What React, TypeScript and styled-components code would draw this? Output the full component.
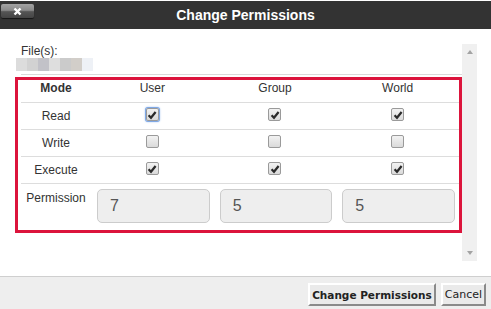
import styled, { createGlobalStyle } from 'styled-components';

const GlobalStyle = createGlobalStyle`
  html, body {
    margin: 0;
    padding: 0;
    background: #fff;
    overflow: hidden;
  }
  body {
    font-family: 'Liberation Sans', Arial, sans-serif;
  }
`;

type Perm = { label: string; user: boolean; group: boolean; world: boolean };

const perms: Perm[] = [
  { label: 'Read', user: true, group: true, world: true },
  { label: 'Write', user: false, group: false, world: false },
  { label: 'Execute', user: true, group: true, world: true },
];

const blurColors = ['#dcdcdc', '#d2d2d2', '#c2c2c8', '#dedede', '#cbcbcb', '#d2cec9', '#eef1f6'];

const Check = ({ checked, focused }: { checked: boolean; focused?: boolean }) => (
  <CheckBox $focused={focused}>
    {checked && (
      <svg width="10" height="10" viewBox="0 0 10 10">
        <path d="M1.6 5.2 L4 7.8 L8.6 2" fill="none" stroke="#2a2a2a" strokeWidth="2.2" />
      </svg>
    )}
  </CheckBox>
);

const App = () => {
  return (
    <Dialog>
      <GlobalStyle />
      <Header>
        <CloseButton>
          <svg width="9" height="9" viewBox="0 0 9 9">
            <path d="M1.5 1.5 L7.5 7.5 M7.5 1.5 L1.5 7.5" stroke="#fff" strokeWidth="2.4" />
          </svg>
        </CloseButton>
        <Title>Change Permissions</Title>
        <div />
      </Header>

      <Body>
        <ScrollArea>
          <Content>
            <FileLabel>File(s):</FileLabel>
            <BlurName>
              {blurColors.map((c, i) => (
                <BlurBlock key={i} $color={c} />
              ))}
            </BlurName>
            <Divider />
            <PermBox>
              <Row $height={21} $head>
                <ModeHead>Mode</ModeHead>
                <div>User</div>
                <div>Group</div>
                <div>World</div>
              </Row>
              {perms.map((p, i) => (
                <Row key={p.label} $height={26}>
                  <div>{p.label}</div>
                  <Check checked={p.user} focused={i === 0} />
                  <Check checked={p.group} />
                  <Check checked={p.world} />
                </Row>
              ))}
              <PermRow>
                <PermLabel>Permission</PermLabel>
                <InputCell>
                  <ValueInput readOnly value="7" />
                </InputCell>
                <InputCell>
                  <ValueInput readOnly value="5" />
                </InputCell>
                <InputCell>
                  <ValueInput readOnly value="5" />
                </InputCell>
              </PermRow>
            </PermBox>
          </Content>
          <ScrollBar>
            <ArrowUp />
            <ArrowDown />
          </ScrollBar>
        </ScrollArea>
      </Body>

      <Footer>
        <FooterButton $bold>Change Permissions</FooterButton>
        <FooterButton>Cancel</FooterButton>
      </Footer>
    </Dialog>
  );
};

export default App;

const Dialog = styled.div`
  width: 491px;
  height: 309px;
  padding-top: 1px;
  box-sizing: border-box;
  display: flex;
  flex-direction: column;
  background: #fff;
  color: #333;
`;

const Header = styled.div`
  height: 28px;
  background: #333;
  display: grid;
  grid-template-columns: 1fr auto 1fr;
  align-items: start;
`;

const CloseButton = styled.div`
  width: 33px;
  height: 14px;
  margin: 3px 0 0 1px;
  border-radius: 2px;
  background: linear-gradient(#a3a3a3 0%, #8a8a8a 45%, #555 55%, #444 100%);
  box-shadow: 0 1px 1px rgba(0, 0, 0, 0.6);
  display: flex;
  align-items: center;
  justify-content: center;
`;

const Title = styled.div`
  color: #fff;
  font-size: 14px;
  font-weight: bold;
  line-height: 28px;
`;

const Body = styled.div`
  flex: 1;
  padding: 15px 14px 0 15px;
`;

const ScrollArea = styled.div`
  height: 217px;
  display: flex;
`;

const Content = styled.div`
  flex: 1;
  display: flex;
  flex-direction: column;
`;

const FileLabel = styled.div`
  font-size: 12px;
  line-height: 14px;
  padding-left: 6px;
`;

const BlurName = styled.div`
  display: flex;
  margin: 0 0 0 1px;
  height: 13px;
`;

const BlurBlock = styled.div<{ $color: string }>`
  width: 11px;
  height: 13px;
  background: ${(p) => p.$color};
`;

const Divider = styled.div`
  height: 1px;
  background: #dadada;
  margin: 3px 0 0 6px;
`;

const PermBox = styled.div`
  margin-top: 2px;
  border: 3px solid #dc143c;
  padding: 0 0 0 3px;
  font-size: 12px;
`;

const Row = styled.div<{ $height: number; $head?: boolean }>`
  display: grid;
  grid-template-columns: 70px repeat(3, 1fr);
  height: ${(p) => p.$height}px;
  border-bottom: 1px solid #ddd;
  align-items: ${(p) => (p.$head ? 'start' : 'center')};
  justify-items: center;
  padding-top: ${(p) => (p.$head ? '1px' : '0')};
  line-height: 14px;
`;

const ModeHead = styled.div`
  font-weight: bold;
`;

const CheckBox = styled.div<{ $focused?: boolean }>`
  width: 11px;
  height: 11px;
  margin-top: -3px;
  border: 1px solid #9a9a9a;
  border-radius: 2px;
  background: linear-gradient(#f2f2f2, #dadada);
  display: flex;
  align-items: center;
  justify-content: center;
  box-shadow: ${(p) => (p.$focused ? '0 0 0 1px #7fa8e6, 0 0 2px 1px #a8c6f0' : 'none')};
`;

const PermRow = styled.div`
  display: grid;
  grid-template-columns: 70px repeat(3, 1fr);
  align-items: start;
  padding: 5px 0 7px;
`;

const PermLabel = styled.div`
  justify-self: center;
  padding-top: 2px;
  line-height: 14px;
`;

const InputCell = styled.div`
  padding: 0 4px 0 6px;
`;

const ValueInput = styled.input`
  width: 100%;
  height: 34px;
  box-sizing: border-box;
  border: 1px solid #ccc;
  border-radius: 5px;
  background: #eee;
  color: #555;
  font-family: 'Liberation Sans', Arial, sans-serif;
  font-size: 16px;
  padding: 0 0 0 12px;
  outline: none;
`;

const ScrollBar = styled.div`
  width: 15px;
  background: #f0f0f0;
  display: flex;
  flex-direction: column;
  justify-content: space-between;
  align-items: center;
  padding: 6px 0;
  box-sizing: border-box;
`;

const ArrowUp = styled.div`
  width: 0;
  height: 0;
  border-left: 3.5px solid transparent;
  border-right: 3.5px solid transparent;
  border-bottom: 4px solid #a3a3a3;
`;

const ArrowDown = styled.div`
  width: 0;
  height: 0;
  border-left: 3.5px solid transparent;
  border-right: 3.5px solid transparent;
  border-top: 4px solid #a3a3a3;
`;

const Footer = styled.div`
  height: 33px;
  box-sizing: border-box;
  border-top: 1px solid #cfcfcf;
  background: #eee;
  display: flex;
  justify-content: flex-end;
  align-items: flex-start;
  gap: 5px;
  padding: 6px 5px 0 0;
`;

const FooterButton = styled.button<{ $bold?: boolean }>`
  height: 23px;
  padding: 0 2px;
  font-family: 'DejaVu Sans', Verdana, sans-serif;
  font-size: ${(p) => (p.$bold ? '10.5px' : '11px')};
  font-weight: ${(p) => (p.$bold ? 'bold' : 'normal')};
  color: #222;
  background: #eaeaea;
  border-style: solid;
  border-width: 2px;
  border-color: #fff #8a8a8a #8a8a8a #fff;
  border-radius: 0;
  white-space: nowrap;
`;
